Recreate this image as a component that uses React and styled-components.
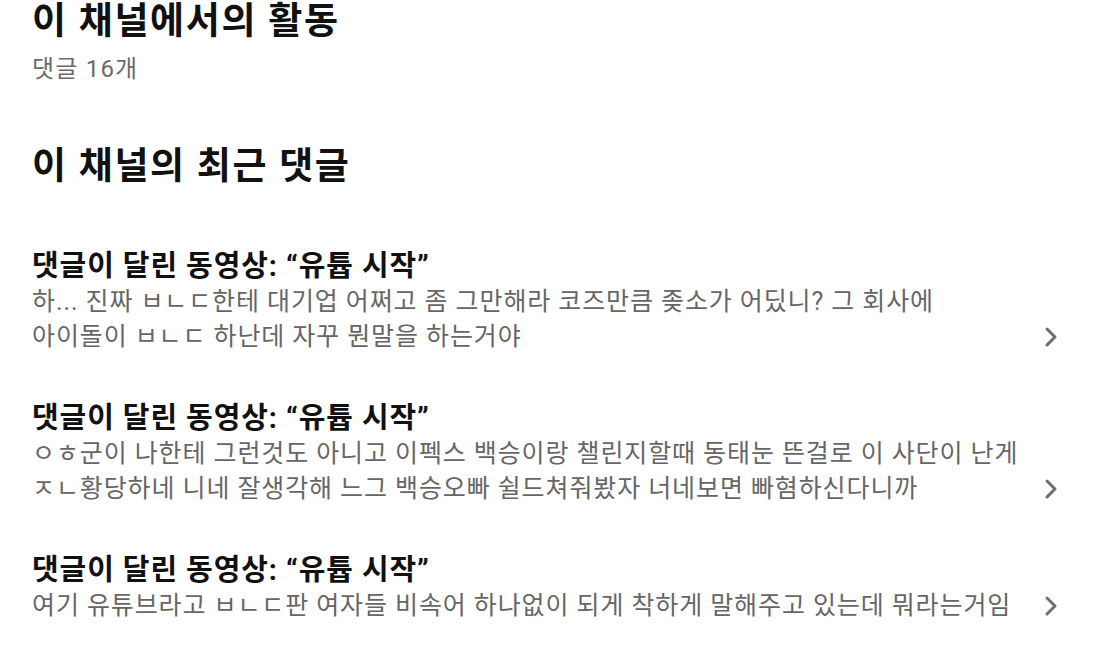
import React from "react";
import styled, { createGlobalStyle } from "styled-components";

const GlobalStyle = createGlobalStyle`
  html, body {
    margin: 0;
    padding: 0;
    background: #ffffff;
  }
  body {
    font-family: Roboto, "Noto Sans CJK KR", "Noto Sans", sans-serif;
    -webkit-font-smoothing: antialiased;
  }
`;

const Page = styled.div`
  width: 1103px;
  height: 665px;
  box-sizing: border-box;
  padding: 0 32px;
  overflow: hidden;
  color: #111111;
`;

const Heading = styled.h1`
  margin: 0;
  font-size: 37px;
  line-height: 43px;
  letter-spacing: 1.7px;
  font-weight: 700;
  color: #111111;
`;

const Count = styled.div`
  margin-top: 10px;
  font-size: 24px;
  line-height: 32px;
  letter-spacing: 1.2px;
  color: #6b6b6b;
`;

const Section = styled.section`
  margin-top: 60px;
`;

const List = styled.div`
  margin-top: 60px;
  display: flex;
  flex-direction: column;
  gap: 46px;
`;

const Item = styled.div`
  display: flex;
  align-items: flex-end;
  justify-content: space-between;
`;

const ItemText = styled.div`
  width: 1002px;
  word-break: keep-all;
`;

const ItemTitle = styled.div`
  font-size: 29px;
  line-height: 36px;
  letter-spacing: 0.9px;
  font-weight: 700;
  color: #111111;
`;

const ItemBody = styled.div`
  font-size: 25px;
  line-height: 35px;
  letter-spacing: 0.9px;
  color: #666666;
`;

const Chevron = styled.div`
  width: 24px;
  height: 35px;
  margin-right: 8px;
  display: flex;
  align-items: center;
  justify-content: center;
  color: #6e6e6e;
`;

const comments = [
  "하... 진짜 ㅂㄴㄷ한테 대기업 어쩌고 좀 그만해라 코즈만큼 좆소가 어딨니? 그 회사에 아이돌이 ㅂㄴㄷ 하난데 자꾸 뭔말을 하는거야",
  "ㅇㅎ군이 나한테 그런것도 아니고 이펙스 백승이랑 챌린지할때 동태눈 뜬걸로 이 사단이 난게 ㅈㄴ황당하네 니네 잘생각해 느그 백승오빠 쉴드쳐줘봤자 너네보면 빠혐하신다니까",
  "여기 유튜브라고 ㅂㄴㄷ판 여자들 비속어 하나없이 되게 착하게 말해주고 있는데 뭐라는거임",
];

const ChevronIcon = () => (
  <svg width="14" height="22" viewBox="0 0 14 22" fill="none">
    <polyline
      points="3,3 11,11 3,19"
      stroke="currentColor"
      strokeWidth="3"
      strokeLinecap="round"
      strokeLinejoin="round"
    />
  </svg>
);

export default function App() {
  return (
    <>
      <GlobalStyle />
      <Page>
        <Heading>이 채널에서의 활동</Heading>
        <Count>댓글 16개</Count>
        <Section>
          <Heading>이 채널의 최근 댓글</Heading>
          <List>
            {comments.map((text, i) => (
              <Item key={i}>
                <ItemText>
                  <ItemTitle>댓글이 달린 동영상: “유튭 시작”</ItemTitle>
                  <ItemBody>{text}</ItemBody>
                </ItemText>
                <Chevron>
                  <ChevronIcon />
                </Chevron>
              </Item>
            ))}
          </List>
        </Section>
      </Page>
    </>
  );
}
